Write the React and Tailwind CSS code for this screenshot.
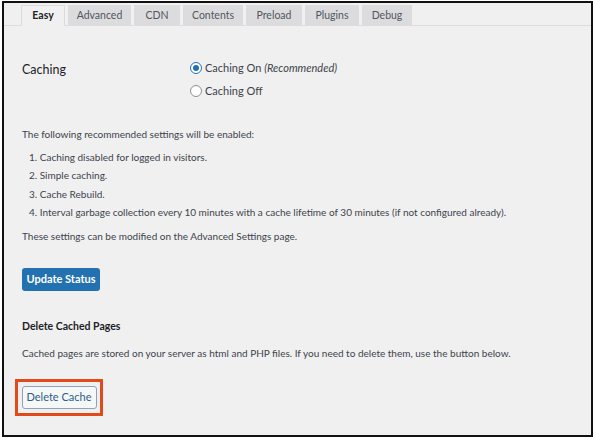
const tabs = [
  { label: 'Easy', w: 'w-[44px]', active: true },
  { label: 'Advanced', w: 'w-[63px]' },
  { label: 'CDN', w: 'w-[46px]' },
  { label: 'Contents', w: 'w-[60px]' },
  { label: 'Preload', w: 'w-[56px]' },
  { label: 'Plugins', w: 'w-[54px]' },
  { label: 'Debug', w: 'w-[50px]' },
];

const steps = [
  'Caching disabled for logged in visitors.',
  'Simple caching.',
  'Cache Rebuild.',
  'Interval garbage collection every 10 minutes with a cache lifetime of 30 minutes (if not configured already).',
];

function Radio({ checked, children }) {
  return (
    <label className="flex items-center gap-[3px] h-[18px]">
      <span
        className={`w-[12px] h-[12px] rounded-full border flex items-center justify-center bg-white ${
          checked ? 'border-[#2271b1]' : 'border-[#8c8f94]'
        }`}
      >
        {checked && <span className="w-[6px] h-[6px] rounded-full bg-[#2271b1]" />}
      </span>
      <span className="text-[11px] text-[#3c434a]">{children}</span>
    </label>
  );
}

export default function App() {
  return (
    <div className="w-[595px] h-[439px] bg-white pt-[1px] pl-[2px] font-['Lato',sans-serif]">
      <div className="w-[591px] h-[436px] border-2 border-[#111] bg-[#f0f0f1]">
        {/* tabs */}
        <div className="flex items-end gap-[3px] pl-[17px] pt-[2px] border-b border-[#dcdcde] h-[23px]">
          {tabs.map((t) => (
            <div
              key={t.label}
              className={`${t.w} h-[20px] flex items-center justify-center text-[10.5px] border border-b-0 ${
                t.active
                  ? 'bg-[#f0f0f1] border-[#dcdcde] text-[#1d2327] font-bold -mb-px h-[21px]'
                  : 'bg-[#dcdcde] border-[#dcdcde] text-[#50575e]'
              }`}
            >
              {t.label}
            </div>
          ))}
        </div>

        <div className="pl-[18px] text-[#3c434a]">
          {/* caching choice */}
          <div className="flex pt-[33px]">
            <div className="w-[168px] text-[12.5px] text-[#1d2327] leading-[18px] pt-[2px]">Caching</div>
            <div className="flex flex-col gap-[5px]">
              <Radio checked>
                Caching On <em>(Recommended)</em>
              </Radio>
              <Radio>Caching Off</Radio>
            </div>
          </div>

          <p className="mt-[25px] text-[10px] leading-[18px]">The following recommended settings will be enabled:</p>
          <ol className="mt-[5px] pl-[7px] text-[10px] leading-[18.3px]">
            {steps.map((s, i) => (
              <li key={i}>
                {i + 1}. {s}
              </li>
            ))}
          </ol>
          <p className="mt-[6px] text-[10px] leading-[18px]">These settings can be modified on the Advanced Settings page.</p>

          <button className="mt-[23px] w-[78px] h-[23px] rounded-[3px] bg-[#2271b1] text-white text-[11px] font-bold">
            Update Status
          </button>

          <h3 className="mt-[26px] text-[10.5px] font-bold text-[#1d2327] leading-[18px]">Delete Cached Pages</h3>
          <p className="mt-[9px] text-[10px] leading-[18px]">
            Cached pages are stored on your server as html and PHP files. If you need to delete them, use the button below.
          </p>

          <div className="mt-[17px] ml-[-7px] w-[88px] h-[37px] border-[3px] border-[#e34a1b] flex items-center justify-center">
            <button className="w-[75px] h-[23px] rounded-[3px] border border-[#8aa4bb] bg-[#f6f7f7] text-[#2a5f8c] text-[11px]">
              Delete Cache
            </button>
          </div>
        </div>
      </div>
    </div>
  );
}
